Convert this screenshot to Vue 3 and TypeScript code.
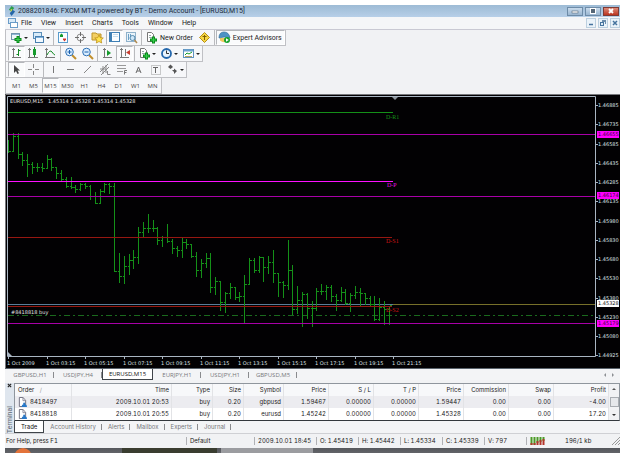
<script setup lang="ts">
import { ref } from 'vue'

interface Tool {
  icon: string
  label: string
  menu?: boolean
  pressed?: boolean
  text?: string
}
type Bar = [high: number, low: number, close: number]

const menus = ['File', 'View', 'Insert', 'Charts', 'Tools', 'Window', 'Help']

const toolbars: Tool[][][] = [
  [
    [
      { icon: 'new-chart', label: 'New chart', menu: true },
      { icon: 'profiles', label: 'Profiles', menu: true },
    ],
    [
      { icon: 'watch', label: 'Market Watch' },
      { icon: 'target', label: 'Data Window' },
      { icon: 'folder', label: 'Navigator' },
      { icon: 'terminal', label: 'Terminal', pressed: true },
      { icon: 'tester', label: 'Strategy Tester' },
    ],
    [
      { icon: 'order', label: 'New Order', text: 'New Order' },
      { icon: 'diamond', label: 'MetaEditor' },
    ],
    [{ icon: 'expert', label: 'Expert Advisors', text: 'Expert Advisors', pressed: true }],
  ],
  [
    [
      { icon: 'bars', label: 'Bar Chart', pressed: true },
      { icon: 'candles', label: 'Candlesticks' },
      { icon: 'line', label: 'Line Chart' },
    ],
    [
      { icon: 'zoom-in', label: 'Zoom In' },
      { icon: 'zoom-out', label: 'Zoom Out' },
    ],
    [
      { icon: 'scroll', label: 'Auto Scroll' },
      { icon: 'shift', label: 'Chart Shift', pressed: true },
    ],
    [
      { icon: 'order', label: 'Indicators', menu: true },
      { icon: 'clock', label: 'Periods', menu: true },
      { icon: 'template', label: 'Templates', menu: true },
    ],
  ],
  [
    [
      { icon: 'cursor', label: 'Cursor', pressed: true },
      { icon: 'cross', label: 'Crosshair' },
    ],
    [
      { icon: 'vline', label: 'Vertical Line' },
      { icon: 'hline', label: 'Horizontal Line' },
      { icon: 'trend', label: 'Trendline' },
      { icon: 'channel', label: 'Equidistant Channel' },
      { icon: 'fibo', label: 'Fibonacci Retracement' },
      { icon: 'text', label: 'Text' },
      { icon: 'label', label: 'Text Label' },
      { icon: 'arrows', label: 'Arrows', menu: true },
    ],
  ],
]

const periods = ['M1', 'M5', 'M15', 'M30', 'H1', 'H4', 'D1', 'W1', 'MN']
const period = ref('M15')

const chartTabs = ['GBPUSD,H1', 'USDJPY,H4', 'EURUSD,M15', 'EURJPY,H1', 'USDJPY,H1', 'GBPUSD,M5']
const chartTab = ref('EURUSD,M15')
const panelTabs = ['Trade', 'Account History', 'Alerts', 'Mailbox', 'Experts', 'Journal']
const panelTab = ref('Trade')

const bars: Bar[] = [
  [140, 152, 151], [133, 151, 136], [133, 158, 154], [152, 165, 160], [154, 176, 164],
  [162, 173, 167], [163, 171, 167], [163, 171, 168], [155, 168, 159], [158, 170, 167],
  [167, 178, 173], [170, 181, 179], [177, 187, 186], [177, 188, 187], [185, 192, 189],
  [183, 190, 184], [183, 188, 186], [185, 199, 196], [192, 203, 203], [189, 203, 191],
  [183, 192, 184], [183, 193, 186], [183, 271, 271], [253, 282, 276], [256, 283, 266],
  [254, 274, 260], [250, 268, 257], [227, 263, 232], [222, 236, 228], [214, 232, 228],
  [220, 231, 228], [227, 244, 240], [236, 246, 237], [224, 242, 241], [239, 253, 248],
  [246, 256, 250], [237, 257, 242], [239, 248, 244], [244, 257, 256], [252, 276, 270],
  [259, 277, 263], [253, 267, 258], [253, 292, 287], [277, 294, 281], [281, 310, 302],
  [292, 312, 293], [283, 298, 287], [287, 299, 297], [292, 301, 296], [275, 323, 284],
  [258, 284, 260], [258, 272, 270], [256, 272, 257], [257, 281, 267], [256, 273, 262],
  [250, 282, 273], [273, 296, 282], [281, 297, 285], [240, 289, 270], [265, 314, 309],
  [286, 313, 300], [292, 326, 294], [293, 318, 308], [301, 326, 308], [288, 310, 291],
  [284, 294, 291], [285, 299, 287], [285, 301, 296], [294, 310, 300], [287, 301, 292],
  [289, 304, 303], [293, 311, 295], [286, 298, 292], [288, 306, 293], [293, 304, 298],
  [296, 306, 304], [296, 320, 319], [298, 320, 307], [301, 324, 309], [307, 324, 305],
]

const barX = (i: number) => Math.round(8 + i * 4.82)
const ranges = bars
  .map(([h, l], i) => `M${barX(i) + 0.5} ${h}V${l + 1}`)
  .join('')
const ticks = bars
  .map(([, , c], i) => {
    const x = barX(i)
    const open = i > 0 ? `M${x - 1} ${bars[i - 1][2] + 0.5}h1` : ''
    return `${open}M${x + 1} ${c + 0.5}h2`
  })
  .join('')

const prices = [
  '1.46885', '1.46735', '1.46585', '1.46435', '1.46285', '1.46135', '1.45980',
  '1.45830', '1.45680', '1.45530', '1.45380', '1.45230', '1.45080', '1.44925',
]
const marks = [
  { y: 134, value: '1.46655', kind: 'level' },
  { y: 195, value: '1.46174', kind: 'level' },
  { y: 303, value: '1.45328', kind: 'bid' },
  { y: 323, value: '1.45179', kind: 'level' },
]
const times = [
  '1 Oct 2009', '1 Oct 03:15', '1 Oct 05:15', '1 Oct 07:15', '1 Oct 09:15', '1 Oct 11:15',
  '1 Oct 13:15', '1 Oct 15:15', '1 Oct 17:15', '1 Oct 19:15', '1 Oct 21:15',
]

const heads = ['Time', 'Type', 'Size', 'Symbol', 'Price', 'S / L', 'T / P', 'Price', 'Commission', 'Swap', 'Profit']
const orders = [
  { id: '8418497', cells: ['2009.10.01 20:53', 'buy', '0.20', 'gbpusd', '1.59467', '0.00000', '0.00000', '1.59447', '0.00', '0.00', '-4.00'] },
  { id: '8418818', cells: ['2009.10.01 20:55', 'buy', '0.20', 'eurusd', '1.45242', '0.00000', '0.00000', '1.45328', '0.00', '0.00', '17.20'] },
]
const quote = ['O: 1.45419', 'H: 1.45442', 'L: 1.45334', 'C: 1.45339']
</script>

<template>
  <svg class="defs" aria-hidden="true">
    <symbol id="new-chart" viewBox="0 0 13 13">
      <rect x="1.5" y="2.5" width="8" height="6" fill="#eef6fb" stroke="#6f93ad" />
      <path d="M2 3.5h7" stroke="#8db6d6" />
      <path d="M8 5v7M4.500 8.500h7" stroke="#0a8a1c" stroke-width="3" />
      <path d="M8 6v5M5.500 8.500h5" stroke="#35d04c" />
    </symbol>
    <symbol id="profiles" viewBox="0 0 13 13">
      <rect x="1.500" y="1.500" width="8" height="6" fill="#d9ecf9" stroke="#5b8fb9" />
      <rect x="3.500" y="5.500" width="8" height="6" fill="#f2f9fe" stroke="#4a80b0" />
      <path d="M4 6.500h7" stroke="#7db0dc" />
    </symbol>
    <symbol id="watch" viewBox="0 0 13 13">
      <rect x="1.500" y="1.500" width="9" height="10" fill="#fafdff" stroke="#5a9ccc" />
      <path d="M3 6V4l1.500-1.500L6 4v2z" fill="#159a2c" />
      <path d="M6 7.500h3v1L7.500 10.500 6 8.500z" fill="#d3342a" />
    </symbol>
    <symbol id="target" viewBox="0 0 13 13">
      <circle cx="6.500" cy="6.500" r="3.500" fill="none" stroke="#8b8b8b" />
      <path d="M6.500 1v4M6.500 8v4M1 6.500h4M8 6.500h4" stroke="#6c6c6c" />
    </symbol>
    <symbol id="folder" viewBox="0 0 13 13">
      <path d="M1 2h4l1 1h4v6H1z" fill="#f3cf63" stroke="#bd9427" />
      <path d="M8 4l1.300 2.700 3 .3-2.200 2 .6 3L8 10.500 5.300 12l.6-3-2.200-2 3-.3z" fill="#ffe34d" stroke="#b8860b" stroke-width=".7" />
    </symbol>
    <symbol id="terminal" viewBox="0 0 13 13">
      <rect x="1.500" y="1.500" width="10" height="9" fill="#fafdff" stroke="#3f7fb5" />
      <path d="M3 2v8" stroke="#3f7fb5" stroke-width="2" />
      <path d="M5 3.500h5M5 5.500h5" stroke="#c5dcec" />
    </symbol>
    <symbol id="tester" viewBox="0 0 13 13">
      <rect x="1.500" y="1.500" width="9" height="9" fill="#e9f3fa" stroke="#8fb2cb" />
      <path d="M3.500 3v6M5.500 3v3" stroke="#6aa0c6" />
      <circle cx="7.500" cy="7" r="2.500" fill="#cfe7f8" stroke="#5388ad" />
      <path d="M9.500 9l2.500 3" stroke="#b18a4e" stroke-width="1.500" />
    </symbol>
    <symbol id="order" viewBox="0 0 13 13">
      <path d="M2.500 1.500h4l2 2v7h-6z" fill="#fff" stroke="#777" />
      <path d="M4 4.500h2M4 6.500h3" stroke="#9aa" />
      <path d="M8.500 5.500v7M5 9h7" stroke="#0a8a1c" stroke-width="3" />
      <path d="M8.500 6.500v5M6 9h5" stroke="#35d04c" />
    </symbol>
    <symbol id="diamond" viewBox="0 0 13 13">
      <path d="M6.500 1.500l5 5-5 5-5-5z" fill="#f6d743" stroke="#b58f16" />
      <path d="M6.500 4v5M4.500 5.500h4" stroke="#806000" />
    </symbol>
    <symbol id="expert" viewBox="0 0 13 13">
      <path d="M2 7h8v2.500Q6 13 2 9.500z" fill="#f0c95b" />
      <path d="M1 7q0-6 5-6t6 6q-6-2-11 0z" fill="#4d93c4" stroke="#2f6b9b" stroke-width=".7" />
      <circle cx="9" cy="9" r="3" fill="#18a32b" />
      <path d="M8 7.200v3.600L10.800 9z" fill="#fff" />
    </symbol>
    <symbol id="bars" viewBox="0 0 13 13">
      <path d="M3.500 1v10M2 10.500h9M2 2.500h3" fill="none" stroke="#777" />
      <path d="M8.500 2v7M6.500 7.500h2M8.500 3.500h2" stroke="#138a24" />
    </symbol>
    <symbol id="candles" viewBox="0 0 13 13">
      <path d="M2.500 1v10M1 10.500h10M1 2.500h3" stroke="#777" />
      <path d="M7.500 0v10" stroke="#138a24" />
      <rect x="6" y="2" width="3" height="6" fill="#159a2c" />
    </symbol>
    <symbol id="line" viewBox="0 0 13 13">
      <path d="M2.500 1v10M1 10.500h10M1 2.500h3" stroke="#777" />
      <path d="M3 8q3-6 5-3t3 3" fill="none" stroke="#138a24" />
    </symbol>
    <symbol id="zoom-in" viewBox="0 0 13 13">
      <path d="M8 8l4 4" stroke="#c08f2c" stroke-width="2" />
      <circle cx="5.500" cy="5" r="3.800" fill="#d9edff" stroke="#2d6fb4" />
      <path d="M5.500 3v4M3.500 5h4" stroke="#1b5faa" />
    </symbol>
    <symbol id="zoom-out" viewBox="0 0 13 13">
      <path d="M8 8l4 4" stroke="#c08f2c" stroke-width="2" />
      <circle cx="5.500" cy="5" r="3.800" fill="#d9edff" stroke="#2d6fb4" />
      <path d="M3.500 5h4" stroke="#1b5faa" />
    </symbol>
    <symbol id="scroll" viewBox="0 0 13 13">
      <path d="M3.500 1v10M2 10.500h9M2 2.500h3" stroke="#777" />
      <path d="M6 3v6l4-3z" fill="#159a2c" />
    </symbol>
    <symbol id="shift" viewBox="0 0 13 13">
      <path d="M3.500 1v10M2 10.500h9M2 2.500h3M7.500 2v7" stroke="#777" />
      <path d="M12 3v5L8 5.500z" fill="#c73d2f" />
    </symbol>
    <symbol id="clock" viewBox="0 0 13 13">
      <circle cx="6.500" cy="6.500" r="4.500" fill="#eaf5ff" stroke="#2467ac" stroke-width="1.800" />
      <path d="M6.500 3.500v3h2.500" fill="none" stroke="#333" />
    </symbol>
    <symbol id="template" viewBox="0 0 13 13">
      <rect x="1.500" y="2.500" width="10" height="8" fill="#fff" stroke="#5f93bf" />
      <path d="M2 3.500h9" stroke="#6ca3d1" stroke-width="2" />
      <path d="M3 8l2-2 2 1 3-2" fill="none" stroke="#159a2c" />
      <path d="M3 9.500h7" stroke="#b8a060" />
    </symbol>
    <symbol id="cursor" viewBox="0 0 13 13">
      <path d="M4 2v8l2-2 1.500 3 1.500-.8L7.500 7.500H10z" fill="#444" />
    </symbol>
    <symbol id="cross" viewBox="0 0 13 13">
      <path d="M6.500 1v4M6.500 8v4M1 6.500h4M8 6.500h4" stroke="#888" />
    </symbol>
    <symbol id="vline" viewBox="0 0 13 13"><path d="M6.500 3v7" stroke="#777" /></symbol>
    <symbol id="hline" viewBox="0 0 13 13"><path d="M3 6.500h7" stroke="#777" /></symbol>
    <symbol id="trend" viewBox="0 0 13 13"><path d="M3 10l7-7" stroke="#888" /></symbol>
    <symbol id="channel" viewBox="0 0 13 13">
      <path d="M2 9l8-8M3 12l8-8M5 3v8M8 2v8M2 6h6M9.500 8v3.500h3" fill="none" stroke="#888" />
    </symbol>
    <symbol id="fibo" viewBox="0 0 13 13">
      <path d="M2 2.500h9M2 5.500h9M2 8.500h6" stroke="#999" />
      <path d="M9.500 11.500v-4h2.500M9.500 9.500h2" fill="none" stroke="#777" />
    </symbol>
    <symbol id="text" viewBox="0 0 13 13">
      <path d="M4 10l2.500-6 2.500 6M5 8h3" fill="none" stroke="#666" />
    </symbol>
    <symbol id="label" viewBox="0 0 13 13">
      <rect x="2.500" y="2.500" width="9" height="9" fill="none" stroke="#999" stroke-dasharray="1 1" />
      <path d="M4 4.500h5M6.500 4v6" stroke="#666" />
    </symbol>
    <symbol id="arrows" viewBox="0 0 13 13">
      <path d="M2 4l2.500-2.500L7 4 4.500 6z" fill="#555" />
      <path d="M6 7h2V5.500L11 8l-3 3V9z" fill="#555" />
    </symbol>
  </svg>

  <main class="window">
    <header class="title">
      <svg class="logo" viewBox="0 0 9 11">
        <path d="M4 0l3 2-3 4-3-2z" fill="#2c9f4c" />
        <path d="M5 4l3 2-4 5-2-3z" fill="#2467a8" />
        <path d="M3 3l2 1-2 3z" fill="#e2d84c" />
      </svg>
      <h1>2088201846: FXCM MT4 powered by BT - Demo Account - [EURUSD,M15]</h1>
      <div class="controls">
        <button aria-label="Minimize"><svg viewBox="0 0 8 8"><rect x="1" y="4" width="6" height="2" fill="#fff" stroke="#567" stroke-width=".6" /></svg></button>
        <button aria-label="Maximize"><svg viewBox="0 0 8 8"><rect x="1.500" y="1.500" width="5" height="5" fill="#567" stroke="#fff" /></svg></button>
        <button class="close" aria-label="Close"><svg viewBox="0 0 8 8"><path d="M2 2l4 4M6 2l-4 4" stroke="#fff" stroke-width="1.800" /></svg></button>
      </div>
    </header>

    <nav class="menu">
      <svg class="doc" viewBox="0 0 11 11">
        <rect x="1.500" y=".5" width="7" height="5" fill="#d8eaf8" stroke="#6a9cc8" />
        <rect x="3.500" y="4.500" width="7" height="5" fill="#fff" stroke="#6a9cc8" />
      </svg>
      <button v-for="m in menus" :key="m">{{ m }}</button>
      <div class="mdi">
        <button aria-label="Minimize chart"><svg viewBox="0 0 8 8"><path d="M2 5.500h4" stroke="#46739e" stroke-width="1.500" /></svg></button>
        <button aria-label="Restore chart"><svg viewBox="0 0 8 8"><path d="M3 1h4v4H6V3H3z" fill="#6c8dac" /><rect x="1.500" y="3.500" width="3" height="3" fill="#dce9f4" stroke="#46739e" /></svg></button>
        <button aria-label="Close chart"><svg viewBox="0 0 8 8"><path d="M2 2l4 4M6 2l-4 4" stroke="#46739e" stroke-width="1.500" /></svg></button>
      </div>
    </nav>

    <section class="toolbars">
      <div v-for="(bar, b) in toolbars" :key="b" class="toolbar" role="toolbar">
        <div v-for="(group, g) in bar" :key="g" class="group">
          <button
            v-for="t in group"
            :key="t.label"
            :aria-label="t.label"
            :class="{ pressed: t.pressed, drop: t.menu, wide: t.text }"
          >
            <svg class="icon"><use :href="'#' + t.icon" /></svg>
            <span v-if="t.text">{{ t.text }}</span>
            <i v-if="t.menu" class="caret"></i>
          </button>
        </div>
      </div>
      <div class="toolbar" role="toolbar">
        <div class="group periods">
          <button v-for="p in periods" :key="p" :class="{ pressed: p === period }" @click="period = p">{{ p }}</button>
        </div>
      </div>
    </section>

    <svg class="chart" viewBox="5 94 615 274" role="img" aria-label="EURUSD,M15">
      <rect x="5" y="94" width="615" height="274" fill="#020103" />
      <path d="M5.500 368V94.500H620" fill="none" stroke="#77787c" />
      <path d="M7.500 356.500V96.500H595.500V356.500z" fill="none" stroke="#a9b5c2" />
      <path d="M8 304.500H393" stroke="#5b7d98" />
      <path d="M393 304.500H595" stroke="#77702a" />
      <path d="M8 315.500H595" stroke="#1a6a1d" stroke-dasharray="6 3 2 3" />
      <path :d="ranges" stroke="#149018" />
      <path :d="ticks" stroke="#149018" />
      <path d="M8 112.500H393" stroke="#149018" />
      <path d="M8 134.500H595M8 196.500H595M8 323.500H595" stroke="#a800a8" />
      <path d="M8 181.500H393" stroke="#ff10ff" />
      <path d="M8 237.500H392M8 306.500H392" stroke="#961711" />
      <path d="M392 97h6l-3 3z" fill="#8f979f" />
      <path d="M8 352v4h4z" fill="#a9b5c2" />
      <g class="note">
        <text x="10" y="103">EURUSD,M15&#160;&#160; 1.45314 1.45328 1.45314 1.45328</text>
        <text x="11" y="314">#8418818 buy</text>
      </g>
      <g class="pivot">
        <text x="386" y="119" class="up">D-R1</text>
        <text x="387" y="187" class="mid">D-P</text>
        <text x="386" y="243">D-S1</text>
        <text x="386" y="312">D-S2</text>
      </g>
      <g v-for="(p, i) in prices" :key="p">
        <path :d="`M596 ${105.5 + Math.round(i * 19.25)}h2`" stroke="#a9b5c2" />
        <text class="scale" x="598" :y="107 + Math.round(i * 19.25)">{{ p }}</text>
      </g>
      <g v-for="m in marks" :key="m.value" :class="m.kind">
        <rect x="597" :y="m.y - 3" width="22" height="7" />
        <text x="598" :y="m.y + 2">{{ m.value }}</text>
      </g>
      <g v-for="(t, i) in times" :key="t">
        <path :d="`M${8.5 + Math.round(i * 38.5)} 357v2`" stroke="#a9b5c2" />
        <text class="scale" :x="7 + Math.round(i * 38.5)" y="365">{{ t }}</text>
      </g>
    </svg>

    <nav class="tabs chart-tabs">
      <button v-for="t in chartTabs" :key="t" :class="{ active: t === chartTab }" @click="chartTab = t">{{ t }}</button>
      <span class="arrows"><i class="left"></i><i class="right"></i></span>
    </nav>

    <section class="panel">
      <aside>
        <button aria-label="Close terminal"><svg viewBox="0 0 6 6"><path d="M1 1l4 4M5 1L1 5" stroke="#222" stroke-width="1.300" /></svg></button>
        <span>Terminal</span>
      </aside>
      <div class="body">
        <div class="grid">
          <table>
            <colgroup>
              <col /><col class="c-time" /><col class="c-type" /><col class="c-size" /><col class="c-symbol" />
              <col v-for="n in 6" :key="n" class="c-num" /><col class="c-profit" />
            </colgroup>
            <thead>
              <tr>
                <th class="order">Order <span class="sort">/</span></th>
                <th v-for="(h, i) in heads" :key="i">{{ h }}</th>
              </tr>
            </thead>
            <tbody>
              <tr v-for="o in orders" :key="o.id">
                <td class="order">
                  <svg viewBox="0 0 10 11">
                    <path d="M1.500.5h4l3 3v7h-7z" fill="#fff" stroke="#667" />
                    <path d="M5.500 1v3h3" fill="none" stroke="#889" />
                    <path d="M4 11q0-3 2-3-1-2 .8-2T8 8q2 0 2 3z" fill="#2878c8" />
                  </svg>{{ o.id }}
                </td>
                <td v-for="(c, i) in o.cells" :key="i">{{ c }}</td>
              </tr>
            </tbody>
          </table>
          <div class="scroll"><i class="up"></i><b></b><i class="down"></i></div>
        </div>
        <nav class="tabs panel-tabs">
          <button v-for="t in panelTabs" :key="t" :class="{ active: t === panelTab }" @click="panelTab = t">{{ t }}</button>
        </nav>
      </div>
    </section>

    <footer class="status">
      <span>For Help, press F1</span>
      <span>Default</span>
      <span>2009.10.01 18:45</span>
      <span v-for="q in quote" :key="q">{{ q }}</span>
      <span>V: 797</span>
      <span class="net">
        <svg viewBox="0 0 15 8">
          <path d="M1.500 0v8M4.500 0v8M7.500 0v6M10.500 0v5M13.500 0v4" stroke="#4b9a26" stroke-width="2" />
          <path d="M1.500 6v2M4.500 6v2M7.500 4v4M10.500 3v5M13.500 2v6" stroke="#b3352a" stroke-width="2" />
        </svg>
        196/1 kb
      </span>
      <svg class="grip" viewBox="0 0 8 8"><path d="M0 8l8-8M3 8l5-5M6 8l2-2" stroke="#999" /></svg>
    </footer>

    <div class="taskbar">
      <i class="orb"></i>
      <i class="task dark"></i>
      <i class="task light"></i>
    </div>
  </main>
</template>

<style>
body {
  background: #fff;
}
</style>

<style scoped>
.defs {
  position: absolute;
  width: 0;
  height: 0;
}
.window {
  box-sizing: border-box;
  min-height: 100vh;
  padding: 5px 5px 0;
  display: flex;
  flex-direction: column;
  overflow: hidden;
  color: #222;
  font: 6px/8px "Open Sans", "Noto Sans", sans-serif;
}
button {
  margin: 0;
  padding: 0;
  border: 0;
  background: none;
  color: inherit;
  font: inherit;
  display: flex;
  align-items: center;
  justify-content: center;
}
.title {
  display: flex;
  align-items: center;
  gap: 2px;
  height: 12px;
  padding: 0 1px 0 3px;
  background: linear-gradient(#9dbbd5, #b7cfe8);
}
.title h1 {
  flex: 1;
  margin: 0;
  font: 7px/10px Roboto, "Open Sans", sans-serif;
  white-space: nowrap;
  color: #1d2b3a;
}
.logo {
  width: 8px;
  height: 10px;
}
.controls {
  display: flex;
  gap: 2px;
}
.controls button {
  box-sizing: border-box;
  width: 16px;
  height: 9px;
  border: 1px solid #6e8ca8;
  background: linear-gradient(#c9dbec, #9ab6d1);
}
.controls svg,
.mdi svg {
  width: 8px;
  height: 8px;
}
.controls .close {
  border-color: #7d3a35;
  background: linear-gradient(#dc8a79, #bb3320);
}
.menu {
  display: flex;
  align-items: center;
  gap: 9px;
  height: 12px;
  padding-left: 2px;
  background: #f5f6f8;
  border-bottom: 1px solid #c9c9d3;
  font: 7px/10px Roboto, "Open Sans", sans-serif;
}
.doc {
  width: 11px;
  height: 11px;
  margin-right: -6px;
}
.mdi {
  display: flex;
  gap: 2px;
  margin-left: auto;
}
.mdi button {
  box-sizing: border-box;
  width: 10px;
  height: 10px;
  border: 1px solid #bccfdf;
  background: #eaf2f9;
}
.toolbars {
  display: flex;
  flex-direction: column;
  align-items: flex-start;
  background: #f1f2f4;
}
.toolbar {
  box-sizing: border-box;
  height: 16px;
  display: flex;
  padding-left: 2px;
  border: solid #bfc0c4;
  border-width: 0 1px 1px;
  background: #f6f7f9;
}
.group {
  display: flex;
}
.group + .group {
  margin-left: 1px;
  padding-left: 1px;
  border-left: 1px solid #b9babd;
}
.group button {
  box-sizing: border-box;
  width: 17px;
  height: 15px;
  border: 1px solid transparent;
}
.group button.drop {
  width: 22px;
  gap: 1px;
}
.group button.wide {
  width: auto;
  padding: 0 2px 0 1px;
  gap: 2px;
  font: 7px/10px Roboto, "Open Sans", sans-serif;
  white-space: nowrap;
}
.group button.pressed {
  border-color: #b4b6ba #fff #fff #b4b6ba;
  background: #fafbfc;
}
.icon {
  flex: none;
  width: 13px;
  height: 13px;
}
.caret {
  border: 2px solid transparent;
  border-top-color: #222;
  border-bottom: 0;
}
.periods {
  color: #444;
}
.chart {
  display: block;
  width: 100%;
  height: auto;
}
.chart text {
  font: 5px "DejaVu Sans", sans-serif;
}
.note {
  fill: #e4e4e4;
}
.scale {
  fill: #dde1e5;
}
.chart .pivot text {
  font: 6px "Liberation Serif", serif;
  fill: #d01414;
}
.chart .pivot .up {
  fill: #149018;
}
.chart .pivot .mid {
  fill: #e010e0;
}
.level rect {
  fill: #ff00ff;
}
.level text {
  fill: #3a003a;
}
.bid rect {
  fill: #fff;
}
.bid text {
  fill: #111;
}
.tabs {
  display: flex;
  height: 12px;
  background: #f3f4f6;
  color: #77787c;
}
.tabs button {
  position: relative;
  white-space: nowrap;
}
.tabs button::after {
  content: "";
  position: absolute;
  right: 0;
  top: 3px;
  height: 6px;
  border-right: 1px solid #8a8b8e;
}
.tabs .active {
  background: #fff;
  color: #111;
  border: 1px solid #40454a;
  border-top: 0;
}
.tabs .active::after {
  display: none;
}
.chart-tabs {
  box-sizing: border-box;
  padding-left: 1px;
  border-top: 1px solid #59626b;
}
.chart-tabs button {
  box-sizing: border-box;
  width: 48px;
}
.chart-tabs .active {
  width: 51px;
}
.arrows {
  display: flex;
  align-items: center;
  gap: 6px;
  margin-left: auto;
  padding-right: 4px;
}
.arrows i {
  border: 2px solid transparent;
}
.arrows .left {
  border-right-color: #8d9094;
}
.arrows .right {
  border-left-color: #8d9094;
}
.panel,
.status {
  font-family: Inter, "Open Sans", sans-serif;
  font-variant-numeric: tabular-nums;
}
.panel {
  display: flex;
  padding-top: 3px;
  background: #f1f2f4;
}
aside {
  width: 9px;
  display: flex;
  flex-direction: column;
  justify-content: space-between;
  align-items: center;
  background: #dfe6ee;
  color: #5b6670;
}
aside button svg {
  width: 5px;
  height: 5px;
}
aside span {
  writing-mode: vertical-rl;
  transform: rotate(180deg);
  font-family: Roboto, sans-serif;
  font-size: 7px;
}
.body {
  flex: 1;
  min-width: 0;
}
.grid {
  display: flex;
  border: 1px solid #8f969d;
  border-bottom-color: #33383d;
  background: #fff;
}
table {
  flex: 1;
  table-layout: fixed;
  border-collapse: collapse;
  width: 100%;
}
.c-time {
  width: 100px;
}
.c-type {
  width: 41px;
}
.c-size {
  width: 31px;
}
.c-symbol {
  width: 40px;
}
.c-num {
  width: 45px;
}
.c-profit {
  width: 55px;
}
th,
td {
  height: 12px;
  padding: 0 2px 0 0;
  border-right: 1px solid #e2e3e6;
  text-align: right;
  font-weight: 400;
  white-space: nowrap;
}
th {
  background: #f7f8fa;
}
tbody tr:first-child {
  background: #ececf0;
}
.order {
  padding-left: 3px;
  text-align: left;
}
.order svg {
  width: 9px;
  height: 10px;
  margin-right: 3px;
  vertical-align: middle;
}
.sort {
  padding-left: 4px;
  color: #999;
}
.scroll {
  width: 10px;
  display: flex;
  flex-direction: column;
  align-items: center;
  justify-content: space-between;
  padding: 4px 0;
  background: #f1f2f4;
}
.scroll i {
  border: 2px solid transparent;
}
.scroll .up {
  border-bottom-color: #555;
  border-top: 0;
}
.scroll .down {
  border-top-color: #333;
  border-bottom: 0;
}
.scroll b {
  width: 7px;
  height: 8px;
  border: 1px solid #a9adb2;
  background: #e6e8eb;
}
.panel-tabs button {
  padding: 0 6px;
}
.status {
  display: flex;
  align-items: center;
  height: 12px;
  padding: 1px 0 1px 1px;
  border-top: 1px solid #cfd0d4;
  background: #f1f2f4;
  white-space: nowrap;
}
.status span {
  box-sizing: border-box;
  width: 42px;
  padding-left: 3px;
  border-left: 1px solid #b0b1b5;
}
.status span:first-child {
  flex: 1;
  padding: 0;
  border: 0;
}
.status span:nth-child(2) {
  width: 68px;
}
.status span:nth-child(3) {
  width: 62px;
}
.status .net {
  display: flex;
  align-items: center;
  gap: 20px;
  width: 86px;
}
.net svg {
  width: 15px;
  height: 8px;
}
.grip {
  width: 8px;
  height: 8px;
}
.taskbar {
  flex: 1;
  min-height: 4px;
  display: flex;
  gap: 4px;
  padding-left: 9px;
  overflow: hidden;
  background: linear-gradient(#55575c, #85868a);
}
.taskbar i {
  height: 18px;
}
.orb {
  width: 18px;
  border-radius: 50%;
  background: #e3733a;
}
.task.dark {
  width: 95px;
  margin-left: 86px;
  background: #3a3d30;
}
.task.light {
  width: 92px;
  background: #9b9ca0;
}
</style>
